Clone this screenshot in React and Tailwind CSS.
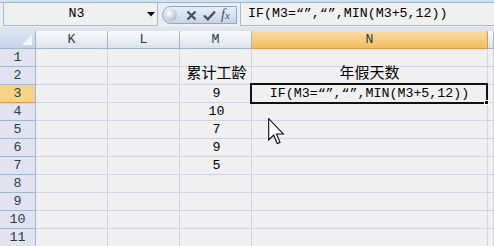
import React from "react";

const mono = { fontFamily: '"Liberation Mono", "Noto Sans CJK SC", monospace' };

function ColHeader({ label, active }) {
  return (
    <div
      className={
        "h-[18px] flex items-center justify-center border-b border-r text-[13.3px] text-[#27413e] " +
        (active
          ? "bg-gradient-to-b from-[#f9dda6] to-[#f0bd5e] border-[#f29436]"
          : "bg-gradient-to-b from-[#f7f9fc] via-[#eceff5] to-[#dde2ea] border-[#9eb6ce]")
      }
    >
      {label}
    </div>
  );
}

function RowHeader({ n, active }) {
  return (
    <div
      className={
        "h-[18px] flex items-center justify-center border-b border-r text-[13.3px] text-[#27413e] " +
        (active ? "bg-[#f5d38b] border-b-[#f29436] border-r-[#9eb6ce]" : "bg-[#e2e2f0] border-[#9eb6ce]")
      }
    >
      {n}
    </div>
  );
}

function Cell({ children, className = "" }) {
  return (
    <div
      className={
        "h-[18px] flex items-center justify-center border-b border-r border-[#d2d2e4] text-black whitespace-nowrap overflow-visible " +
        className
      }
    >
      {children}
    </div>
  );
}

export default function App() {
  const mValues = { 2: "累计工龄", 3: "9", 4: "10", 5: "7", 6: "9", 7: "5" };
  const nValues = { 2: "年假天数", 3: "IF(M3=“”,“”,MIN(M3+5,12))" };
  const rows = [1, 2, 3, 4, 5, 6, 7, 8, 9, 10, 11];
  return (
    <div className="relative w-[494px] h-[246px] overflow-hidden bg-[#f0f0f0]" style={mono}>
      {/* top strip */}
      <div className="h-[3px] bg-[#d3e0f0] border-b border-[#9fb5d0]" />
      {/* formula bar */}
      <div className="h-[24px] flex items-stretch bg-[#e9eef5]">
        <div className="ml-[3px] w-[155px] h-[23px] bg-[#f0f0f0] border-b border-x border-[#a9bad0] flex items-center relative">
          <div className="flex-1 text-center text-[13.3px] text-black pr-[8px]">N3</div>
          <svg width="8" height="5" viewBox="0 0 8 5" className="absolute right-[2px] top-[9px]">
            <path d="M0 0 H8 L4 4.5 Z" fill="#111" />
          </svg>
        </div>
        <div className="w-[4px]" />
        <div className="mt-[3px] h-[18px] w-[75px] rounded-l-full rounded-r-[3px] border border-[#8ea6c7] bg-gradient-to-b from-[#e7eef8] to-[#c6d5ea] flex items-center px-[2px]">
          <div className="w-[12px] h-[12px] rounded-full bg-[radial-gradient(circle_at_35%_35%,#ffffff,#c9ced6_55%,#9aa2ae)]" />
          <svg width="11" height="11" viewBox="0 0 11 11" className="ml-[9px]">
            <path d="M1.5 1.5 L9.5 9.5 M9.5 1.5 L1.5 9.5" stroke="#4a4f57" strokeWidth="2.2" />
          </svg>
          <svg width="13" height="11" viewBox="0 0 13 11" className="ml-[6px]">
            <path d="M1 5.5 L4.8 9.3 L12 1.5" stroke="#4a4f57" strokeWidth="2.2" fill="none" />
          </svg>
          <span className="ml-[5px] text-[14px] italic text-[#4a4f57] leading-none" style={{ fontFamily: '"Liberation Serif", serif' }}>
            f<span className="text-[11px]">x</span>
          </span>
        </div>
        <div className="w-[3px]" />
        <div className="flex-1 h-[23px] bg-[#f0f0f0] border-b border-l border-[#a9bad0] flex items-center pl-[7px] text-[13.3px] text-black whitespace-nowrap">
          IF(M3=“”,“”,MIN(M3+5,12))
        </div>
      </div>
      {/* gap */}
      <div className="h-[4px] bg-[#dde4ee]" />
      {/* grid */}
      <div className="grid grid-cols-[36px_72px_72px_72px_236px_1fr]">
        <div className="h-[18px] border-b border-r border-[#9eb6ce] bg-gradient-to-b from-[#dce6f3] to-[#c4d4e9] relative">
          <svg width="10" height="10" viewBox="0 0 10 10" className="absolute right-[3px] bottom-[3px]">
            <path d="M10 0 V10 H0 Z" fill="#f4f7fb" />
          </svg>
        </div>
        <ColHeader label="K" />
        <ColHeader label="L" />
        <ColHeader label="M" />
        <ColHeader label="N" active />
        <ColHeader label="" />
        {rows.map((r) => (
          <React.Fragment key={r}>
            <RowHeader n={r} active={r === 3} />
            <Cell />
            <Cell />
            <Cell className={r === 2 ? "text-[15px]" : "text-[13.3px]"}>
              <span className="relative left-[1px]">{mValues[r] || ""}</span>
            </Cell>
            <Cell className={r === 2 ? "text-[15px]" : "text-[13.3px]"}>{nValues[r] || ""}</Cell>
            <Cell />
          </React.Fragment>
        ))}
      </div>
      {/* selection border */}
      <div className="absolute left-[250px] top-[83px] w-[238px] h-[21px] border-2 border-[#111]" />
      <div className="absolute left-[484px] top-[100px] w-[5px] h-[5px] bg-[#111] border border-white" />
      {/* mouse cursor */}
      <svg width="17" height="27" viewBox="0 0 12 19" className="absolute left-[268px] top-[118px]">
        <path d="M0.5 0.5 L0.5 15.5 L4 12 L6.5 18 L8.5 17.2 L6 11.2 L10.8 11.2 Z" fill="#fff" stroke="#000" strokeWidth="0.75" strokeLinejoin="miter" />
      </svg>
    </div>
  );
}
